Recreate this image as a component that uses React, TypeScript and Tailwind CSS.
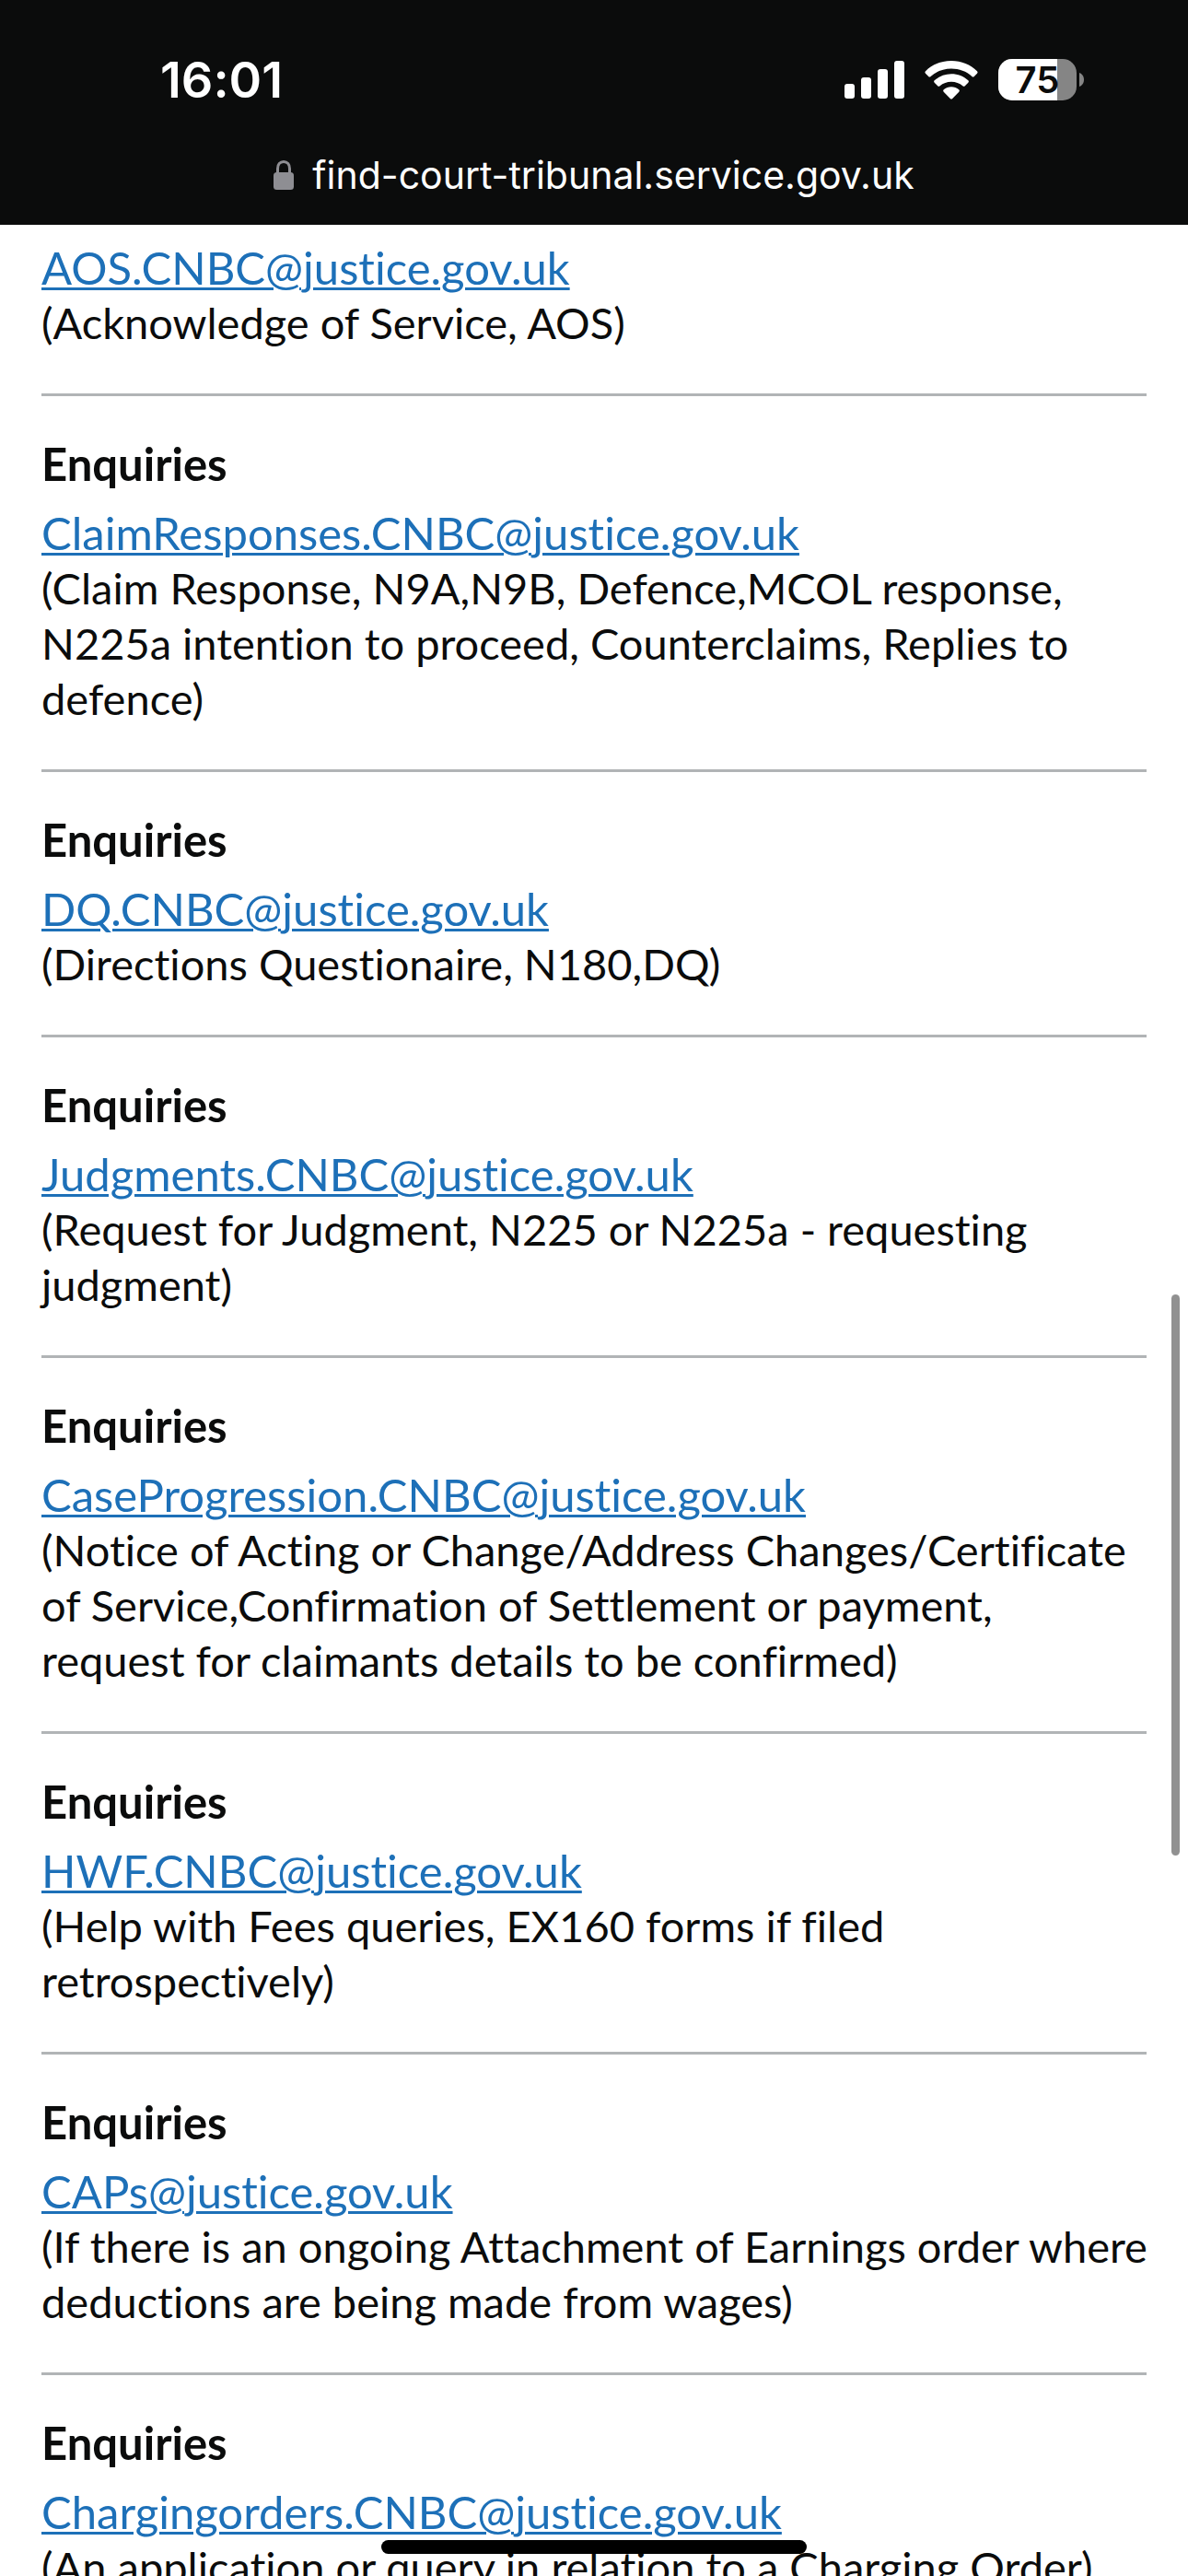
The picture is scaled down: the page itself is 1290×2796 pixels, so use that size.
type Contact = { title?: string; email: string; note: string };

const contacts: Contact[] = [
  { email: "AOS.CNBC@justice.gov.uk", note: "(Acknowledge of Service, AOS)" },
  {
    title: "Enquiries",
    email: "ClaimResponses.CNBC@justice.gov.uk",
    note: "(Claim Response, N9A,N9B, Defence,MCOL response, N225a intention to proceed, Counterclaims, Replies to defence)",
  },
  { title: "Enquiries", email: "DQ.CNBC@justice.gov.uk", note: "(Directions Questionaire, N180,DQ)" },
  {
    title: "Enquiries",
    email: "Judgments.CNBC@justice.gov.uk",
    note: "(Request for Judgment, N225 or N225a - requesting judgment)",
  },
  {
    title: "Enquiries",
    email: "CaseProgression.CNBC@justice.gov.uk",
    note: "(Notice of Acting or Change/Address Changes/Certificate of Service,Confirmation of Settlement or payment,\nrequest for claimants details to be confirmed)",
  },
  {
    title: "Enquiries",
    email: "HWF.CNBC@justice.gov.uk",
    note: "(Help with Fees queries, EX160 forms if filed retrospectively)",
  },
  {
    title: "Enquiries",
    email: "CAPs@justice.gov.uk",
    note: "(If there is an ongoing Attachment of Earnings order where deductions are being made from wages)",
  },
  {
    title: "Enquiries",
    email: "Chargingorders.CNBC@justice.gov.uk",
    note: "(An application or query in relation to a Charging Order)",
  },
];

function SignalIcon() {
  return (
    <svg width="65" height="41" viewBox="0 0 65 41" fill="#fff" aria-label="Mobile signal">
      <rect x="0" y="25" width="11" height="16" rx="3" />
      <rect x="18" y="18" width="11" height="23" rx="3" />
      <rect x="36" y="9" width="11" height="32" rx="3" />
      <rect x="54" y="0" width="11" height="41" rx="3" />
    </svg>
  );
}

function WifiIcon() {
  return (
    <svg width="58" height="42" viewBox="0 0 58 42" fill="#fff" aria-label="Wi-Fi">
      <path d="M29 0C40 0 50 4.200 57 11.200Q58.200 12.500 57 13.700L53.800 17Q52.600 18 51.400 17C45.500 11.600 37.500 8.600 29 8.600S12.500 11.600 6.600 17Q5.400 18 4.200 17L1 13.700Q-.2 12.500 1 11.200C8 4.200 18 0 29 0Z" />
      <path d="M29 14.200C36 14.200 42.500 16.800 47.300 21.300Q48.500 22.500 47.300 23.700L43.800 27.200Q42.600 28.300 41.400 27.200C38 24.300 33.700 22.700 29 22.700S20 24.300 16.600 27.200Q15.400 28.300 14.200 27.200L10.700 23.700Q9.500 22.500 10.700 21.300C15.500 16.800 22 14.200 29 14.200Z" />
      <path d="M29 28.300C32 28.300 35 29.400 37.300 31.300Q38.500 32.500 37.300 33.700L30.200 40.900Q29 42 27.800 40.900L20.700 33.700Q19.500 32.500 20.700 31.300C23 29.400 26 28.300 29 28.300Z" />
    </svg>
  );
}

function Battery({ level }: { level: number }) {
  return (
    <div className="flex items-center gap-[3px]">
      <div className="relative flex h-[45px] w-[85px] items-center justify-center overflow-hidden rounded-[15px] bg-[#858585]">
        <div className="absolute inset-y-0 left-0 bg-white" style={{ width: `${level}%` }} />
        <span className="relative text-[40px] leading-[45px] font-semibold text-[#0b0c0c]">{level}</span>
      </div>
      <svg width="5" height="15" viewBox="0 0 5 15" fill="#858585" aria-hidden="true">
        <path d="M0 0C3 1 5 4 5 7.500S3 14 0 15Z" />
      </svg>
    </div>
  );
}

function LockIcon() {
  return (
    <svg width="22" height="32" viewBox="0 0 22 32" aria-hidden="true">
      <rect y="13" width="22" height="19" rx="3.500" fill="#8e8e93" />
      <path d="M4.500 15V9C4.500 4.500 7 1.500 11 1.500S17.500 4.500 17.500 9V15" fill="none" stroke="#8e8e93" strokeWidth="3" />
    </svg>
  );
}

export default function App() {
  return (
    <div className="relative flex h-screen flex-col overflow-hidden bg-white font-['Lato',sans-serif] text-[#0b0c0c] [font-variant-ligatures:none]">
      <header className="flex shrink-0 flex-col bg-[#0b0c0c] pt-[56px] pb-[24px] font-['Inter',sans-serif] text-white">
        <div className="flex h-[61px] items-center justify-between pr-[113px] pl-[174px]">
          <time className="text-[54px] leading-[61px] font-semibold">16:01</time>
          <div className="flex items-center gap-[22px]">
            <SignalIcon />
            <WifiIcon />
            <Battery level={75} />
          </div>
        </div>
        <div className="mt-[43px] flex h-[60px] items-center justify-center gap-[20px]">
          <LockIcon />
          <span className="text-[41px] leading-[60px]">find-court-tribunal.service.gov.uk</span>
        </div>
      </header>

      <main className="min-h-0 flex-1 overflow-hidden px-[45px] pt-[16px] text-[49px] leading-[60px]">
        {contacts.map((c) => (
          <section key={c.email} className="mb-[43px] border-b-[3px] border-[#b1b4b6] pb-[47px]">
            {c.title && <h2 className="mb-[15px] font-bold">{c.title}</h2>}
            <a
              href={`mailto:${c.email}`}
              className="block w-fit text-[#1d70b8] underline decoration-[3px] underline-offset-[3px]"
            >
              {c.email}
            </a>
            <p className="-mr-5 text-[47px] whitespace-pre-line">{c.note}</p>
          </section>
        ))}
      </main>

      <div className="absolute top-[1405px] right-[9px] h-[609px] w-[9px] rounded-full bg-[#919191]" />
      <div className="absolute bottom-[24px] left-1/2 h-[15px] w-[462px] -translate-x-1/2 rounded-full bg-black" />
    </div>
  );
}
